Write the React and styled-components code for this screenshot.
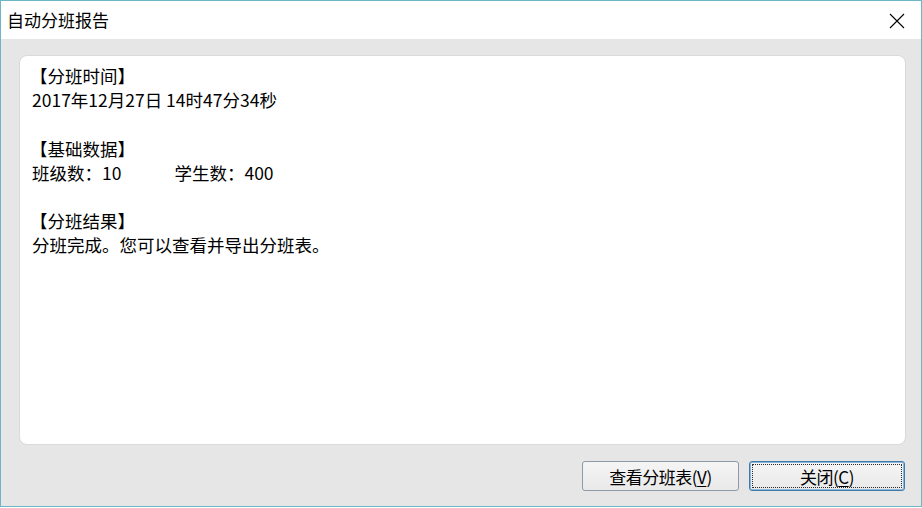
import React from 'react';
import styled, { createGlobalStyle } from 'styled-components';

const GlobalStyle = createGlobalStyle`
  html, body {
    margin: 0;
    padding: 0;
    background: #ffffff;
  }
  * {
    box-sizing: border-box;
  }
`;

const Window = styled.div`
  width: 922px;
  height: 507px;
  border: 1px solid #6cb6c5;
  display: flex;
  flex-direction: column;
  background: #e6e6e6;
  font-family: "Noto Sans CJK SC", "Liberation Sans", sans-serif;
  color: #000;
`;

const TitleBar = styled.div`
  height: 38px;
  flex-shrink: 0;
  background: #ffffff;
  display: flex;
  align-items: center;
  justify-content: space-between;
  padding: 0 16px 0 6px;
`;

const Title = styled.span`
  font-size: 17px;
  line-height: 20px;
  margin-top: -1px;
`;

const CloseIcon = styled.svg`
  width: 16px;
  height: 16px;
  display: block;
  margin-top: 1px;
`;

const Body = styled.div`
  flex: 1;
  display: flex;
  flex-direction: column;
  padding: 16px 15px 15px 18px;
`;

const Panel = styled.div`
  height: 390px;
  background: #ffffff;
  border: 1px solid #dadada;
  border-radius: 8px;
  padding: 8px 12px;
  font-size: 17.5px;
  line-height: 24.2px;
`;

const Line = styled.div`
  white-space: pre;
  min-height: 24.2px;
`;

const Heading = styled(Line)`
  margin-left: -2px;
`;

const Gap = styled.span`
  display: inline-block;
  width: ${p => p.w}px;
`;

const Footer = styled.div`
  display: flex;
  justify-content: flex-end;
  gap: 10px;
  margin-top: 16px;
  padding-right: 1px;
`;

const Button = styled.button`
  width: ${p => p.w}px;
  height: 30px;
  border-radius: 3px;
  border: 1px solid ${p => (p.focused ? '#3d7bad' : '#8f9aa6')};
  background: linear-gradient(#f5f5f5, #e9e9e9);
  font-family: "Noto Sans CJK SC", "Liberation Sans", sans-serif;
  font-size: 17px;
  color: #000;
  padding: 0;
  position: relative;
  box-shadow: ${p => (p.focused ? 'inset 0 0 0 1px #8fb6d8' : 'none')};

  &::after {
    content: '';
    display: ${p => (p.focused ? 'block' : 'none')};
    position: absolute;
    inset: 2px;
    border: 1px dotted #2a2a2a;
    border-radius: 1px;
  }

  u {
    text-decoration: underline;
    text-underline-offset: 2px;
  }
`;

const Label = styled.span`
  letter-spacing: -0.5px;
`;

export default function App() {
  return (
    <>
      <GlobalStyle />
      <Window>
        <TitleBar>
          <Title>自动分班报告</Title>
          <CloseIcon viewBox="0 0 16 16">
            <path d="M1 1 L15 15 M15 1 L1 15" stroke="#000" strokeWidth="1.1" fill="none" />
          </CloseIcon>
        </TitleBar>
        <Body>
          <Panel>
            <Heading>【分班时间】</Heading>
            <Line>2017年12月27日 14时47分34秒</Line>
            <Line />
            <Heading>【基础数据】</Heading>
            <Line>班级数：10<Gap w={53} />学生数：400</Line>
            <Line />
            <Heading>【分班结果】</Heading>
            <Line>分班完成。您可以查看并导出分班表。</Line>
          </Panel>
          <Footer>
            <Button w={157}>
              <Label>查看分班表(<u>V</u>)</Label>
            </Button>
            <Button w={156} focused>
              <Label>关闭(<u>C</u>)</Label>
            </Button>
          </Footer>
        </Body>
      </Window>
    </>
  );
}
